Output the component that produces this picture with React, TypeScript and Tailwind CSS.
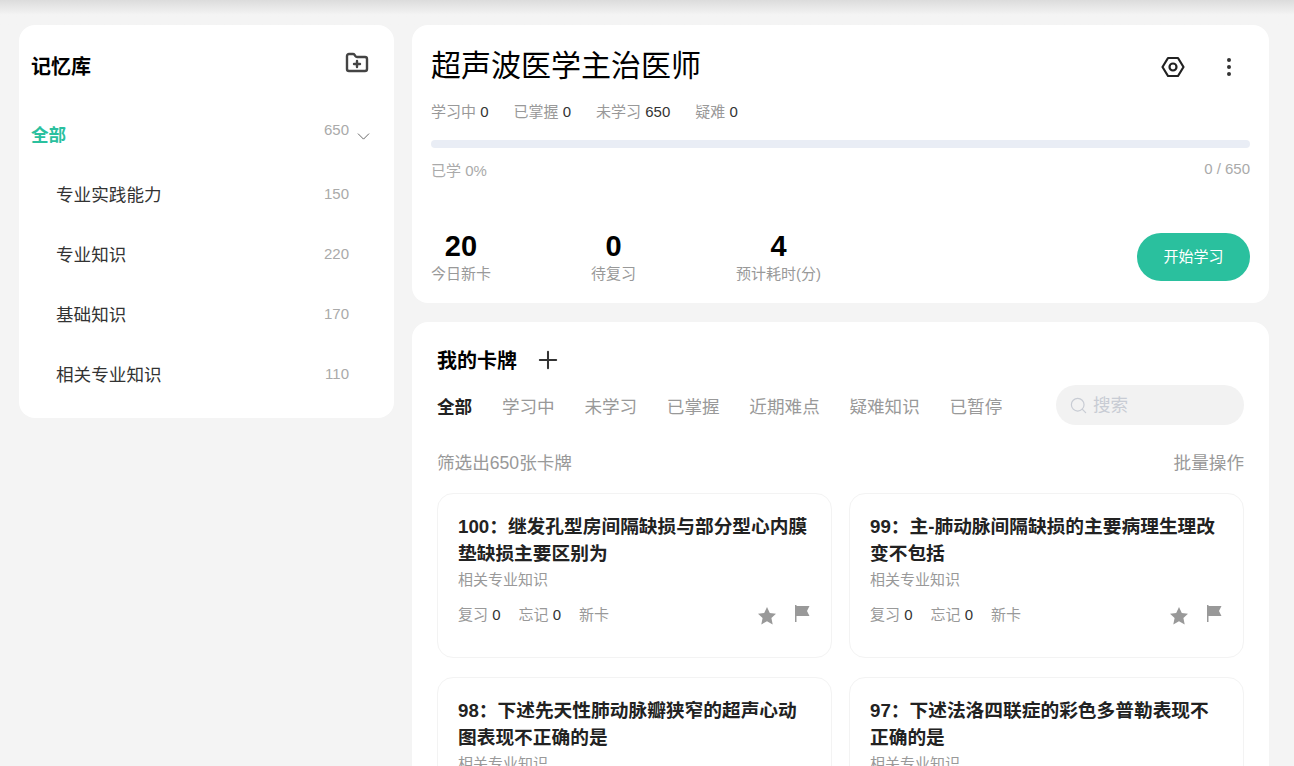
import { ChevronDown, EllipsisVertical, FolderPlus, Plus, Search } from 'lucide-react';

const decks = [
  { name: '专业实践能力', count: 150 },
  { name: '专业知识', count: 220 },
  { name: '基础知识', count: 170 },
  { name: '相关专业知识', count: 110 },
];

const summary = [
  { label: '学习中', value: 0 },
  { label: '已掌握', value: 0 },
  { label: '未学习', value: 650 },
  { label: '疑难', value: 0 },
];

const tabs = ['全部', '学习中', '未学习', '已掌握', '近期难点', '疑难知识', '已暂停'];

const cards = [
  { title: '100：继发孔型房间隔缺损与部分型心内膜垫缺损主要区别为' },
  { title: '99：主-肺动脉间隔缺损的主要病理生理改变不包括' },
  { title: '98：下述先天性肺动脉瓣狭窄的超声心动图表现不正确的是' },
  { title: '97：下述法洛四联症的彩色多普勒表现不正确的是' },
];

function Stat({ value, label, className }: { value: number; label: string; className: string }) {
  return (
    <div className={`flex flex-col items-center ${className}`}>
      <span className="text-[29px] leading-[30px] font-bold text-black">{value}</span>
      <span className="text-[15px] leading-[26px] whitespace-nowrap text-[#999]">{label}</span>
    </div>
  );
}

function Card({ title }: { title: string }) {
  return (
    <div className="h-[165px] rounded-2xl border border-[#f3f3f3] bg-white px-5 pt-[19px]">
      <h3 className="text-[18.72px] leading-[27px] font-bold text-[#222]">{title}</h3>
      <p className="text-[15px] leading-[26px] text-[#999]">相关专业知识</p>
      <div className="mt-[11px] flex items-center justify-between">
        <div className="flex gap-[18px] text-[15px] text-[#999]">
          <span>
            复习 <span className="text-[#333]">0</span>
          </span>
          <span>
            忘记 <span className="text-[#333]">0</span>
          </span>
          <span>新卡</span>
        </div>
        <div className="flex items-center gap-[18px] pr-[1px]">
          <svg width="20" height="20" viewBox="0 0 20 20" className="mt-[1px]">
            <path fill="#999" d="M10 1l2.8 6 6.2.7-4.600 4.300 1.300 6.500L10 15.200 4.300 18.500 5.600 12 1 7.700 7.200 7z" />
          </svg>
          <svg width="15" height="17" viewBox="0 0 15 17" className="mb-[4px]">
            <path fill="#999" d="M0 0h1.500v17H0zM1.500 1H14.500l-2.500 5 2.500 5H1.500z" />
          </svg>
        </div>
      </div>
    </div>
  );
}

export default function App() {
  return (
    <div className="h-[766px] overflow-hidden bg-[#f4f4f4] font-['Liberation_Sans','Noto_Sans_CJK_SC',sans-serif]">
      <div className="h-[25px] bg-gradient-to-b from-[#dcdcdc] to-[#f4f4f4] to-60%" />
      <div className="flex items-start gap-[18px] pl-[19px] pr-[25px]">
        <aside className="h-[393px] w-[375px] shrink-0 rounded-2xl bg-white pl-3 pr-[45px]">
          <div className="flex h-[83px] items-center justify-between">
            <h2 className="text-xl font-bold text-black">记忆库</h2>
            <FolderPlus className="mr-[-20px] mb-[7px] size-[24px] text-[#444]" strokeWidth={2.4} />
          </div>
          <div className="mb-[2px] flex h-[55px] items-center justify-between">
            <span className="text-[17.6px] font-bold text-[#2ac09e]">全部</span>
            <div className="relative mb-[12px] text-[15px] leading-[20px] text-[#aaa]">
              650
              <ChevronDown className="absolute top-[6px] left-full ml-[4px] size-[21px] text-[#555]" strokeWidth={1} />
            </div>
          </div>
          {decks.map((deck) => (
            <div key={deck.name} className="flex h-[60px] items-center justify-between pl-[25px]">
              <span className="text-[17.6px] text-[#333]">{deck.name}</span>
              <span className="mb-[2px] text-[15px] text-[#aaa]">{deck.count}</span>
            </div>
          ))}
        </aside>

        <main className="flex-1">
          <section className="h-[278px] rounded-2xl bg-white px-[19px]">
            <div className="flex items-start justify-between pt-[19px]">
              <h1 className="text-[30px] leading-[44px] text-black">超声波医学主治医师</h1>
              <div className="flex items-center gap-[32px] pt-[11px] pr-[9px]">
                <svg width="24" height="22" viewBox="0 0 24 22" fill="none" stroke="#222" strokeWidth="2.2" strokeLinejoin="round">
                  <path d="M7 2h10l5.500 9-5.500 9H7l-5.500-9z" />
                  <circle cx="12" cy="11" r="3.500" />
                </svg>
                <EllipsisVertical className="size-[24px] text-[#333]" strokeWidth={2} />
              </div>
            </div>
            <div className="mt-[12px] flex gap-[25px] text-[15px] leading-[24px] text-[#999]">
              {summary.map((item) => (
                <span key={item.label}>
                  {item.label} <span className="text-[#333]">{item.value}</span>
                </span>
              ))}
            </div>
            <div className="mt-[16px] h-[8px] rounded bg-[#e9edf5]" />
            <div className="mt-[11px] flex justify-between text-[15px] leading-[24px] text-[#aaa]">
              <span>已学 0%</span>
              <span className="mt-[-2px]">0 / 650</span>
            </div>
            <div className="mt-[48px] flex items-start">
              <Stat value={20} label="今日新卡" className="w-[60px]" />
              <Stat value={0} label="待复习" className="ml-[100px] w-[45px]" />
              <Stat value={4} label="预计耗时(分)" className="ml-[100px] w-[85px]" />
              <button className="mt-[2px] ml-auto h-[48px] w-[113px] rounded-full bg-[#2ac09e] text-[15px] text-white">
                开始学习
              </button>
            </div>
          </section>

          <section className="mt-[19px] rounded-2xl bg-white px-[25px] pt-[23px]">
            <div className="flex h-[34px] items-center gap-[17px]">
              <h2 className="mb-[2px] text-xl leading-[34px] font-bold text-black">我的卡牌</h2>
              <Plus className="mb-[4px] size-[28px] text-[#333]" strokeWidth={1.75} />
            </div>
            <div className="mt-[6px] flex items-center justify-between">
              <div className="flex gap-[29.7px] pt-[4px] text-[17.6px]">
                {tabs.map((tab, i) => (
                  <span key={tab} className={i === 0 ? 'font-bold text-[#222]' : 'text-[#999]'}>
                    {tab}
                  </span>
                ))}
              </div>
              <div className="flex h-[40px] w-[188px] items-center gap-[5px] rounded-full bg-[#f2f2f2] pl-[13px] text-[17.6px] text-[#c8ccd4]">
                <Search className="size-[19px]" strokeWidth={1.5} />
                搜索
              </div>
            </div>
            <div className="mt-[25px] flex justify-between text-[17.6px] leading-[27px] text-[#999]">
              <span>筛选出650张卡牌</span>
              <span>批量操作</span>
            </div>
            <div className="mt-[16px] grid grid-cols-2 gap-x-[17px] gap-y-[19px]">
              {cards.map((card) => (
                <Card key={card.title} title={card.title} />
              ))}
            </div>
          </section>
        </main>
      </div>
    </div>
  );
}
